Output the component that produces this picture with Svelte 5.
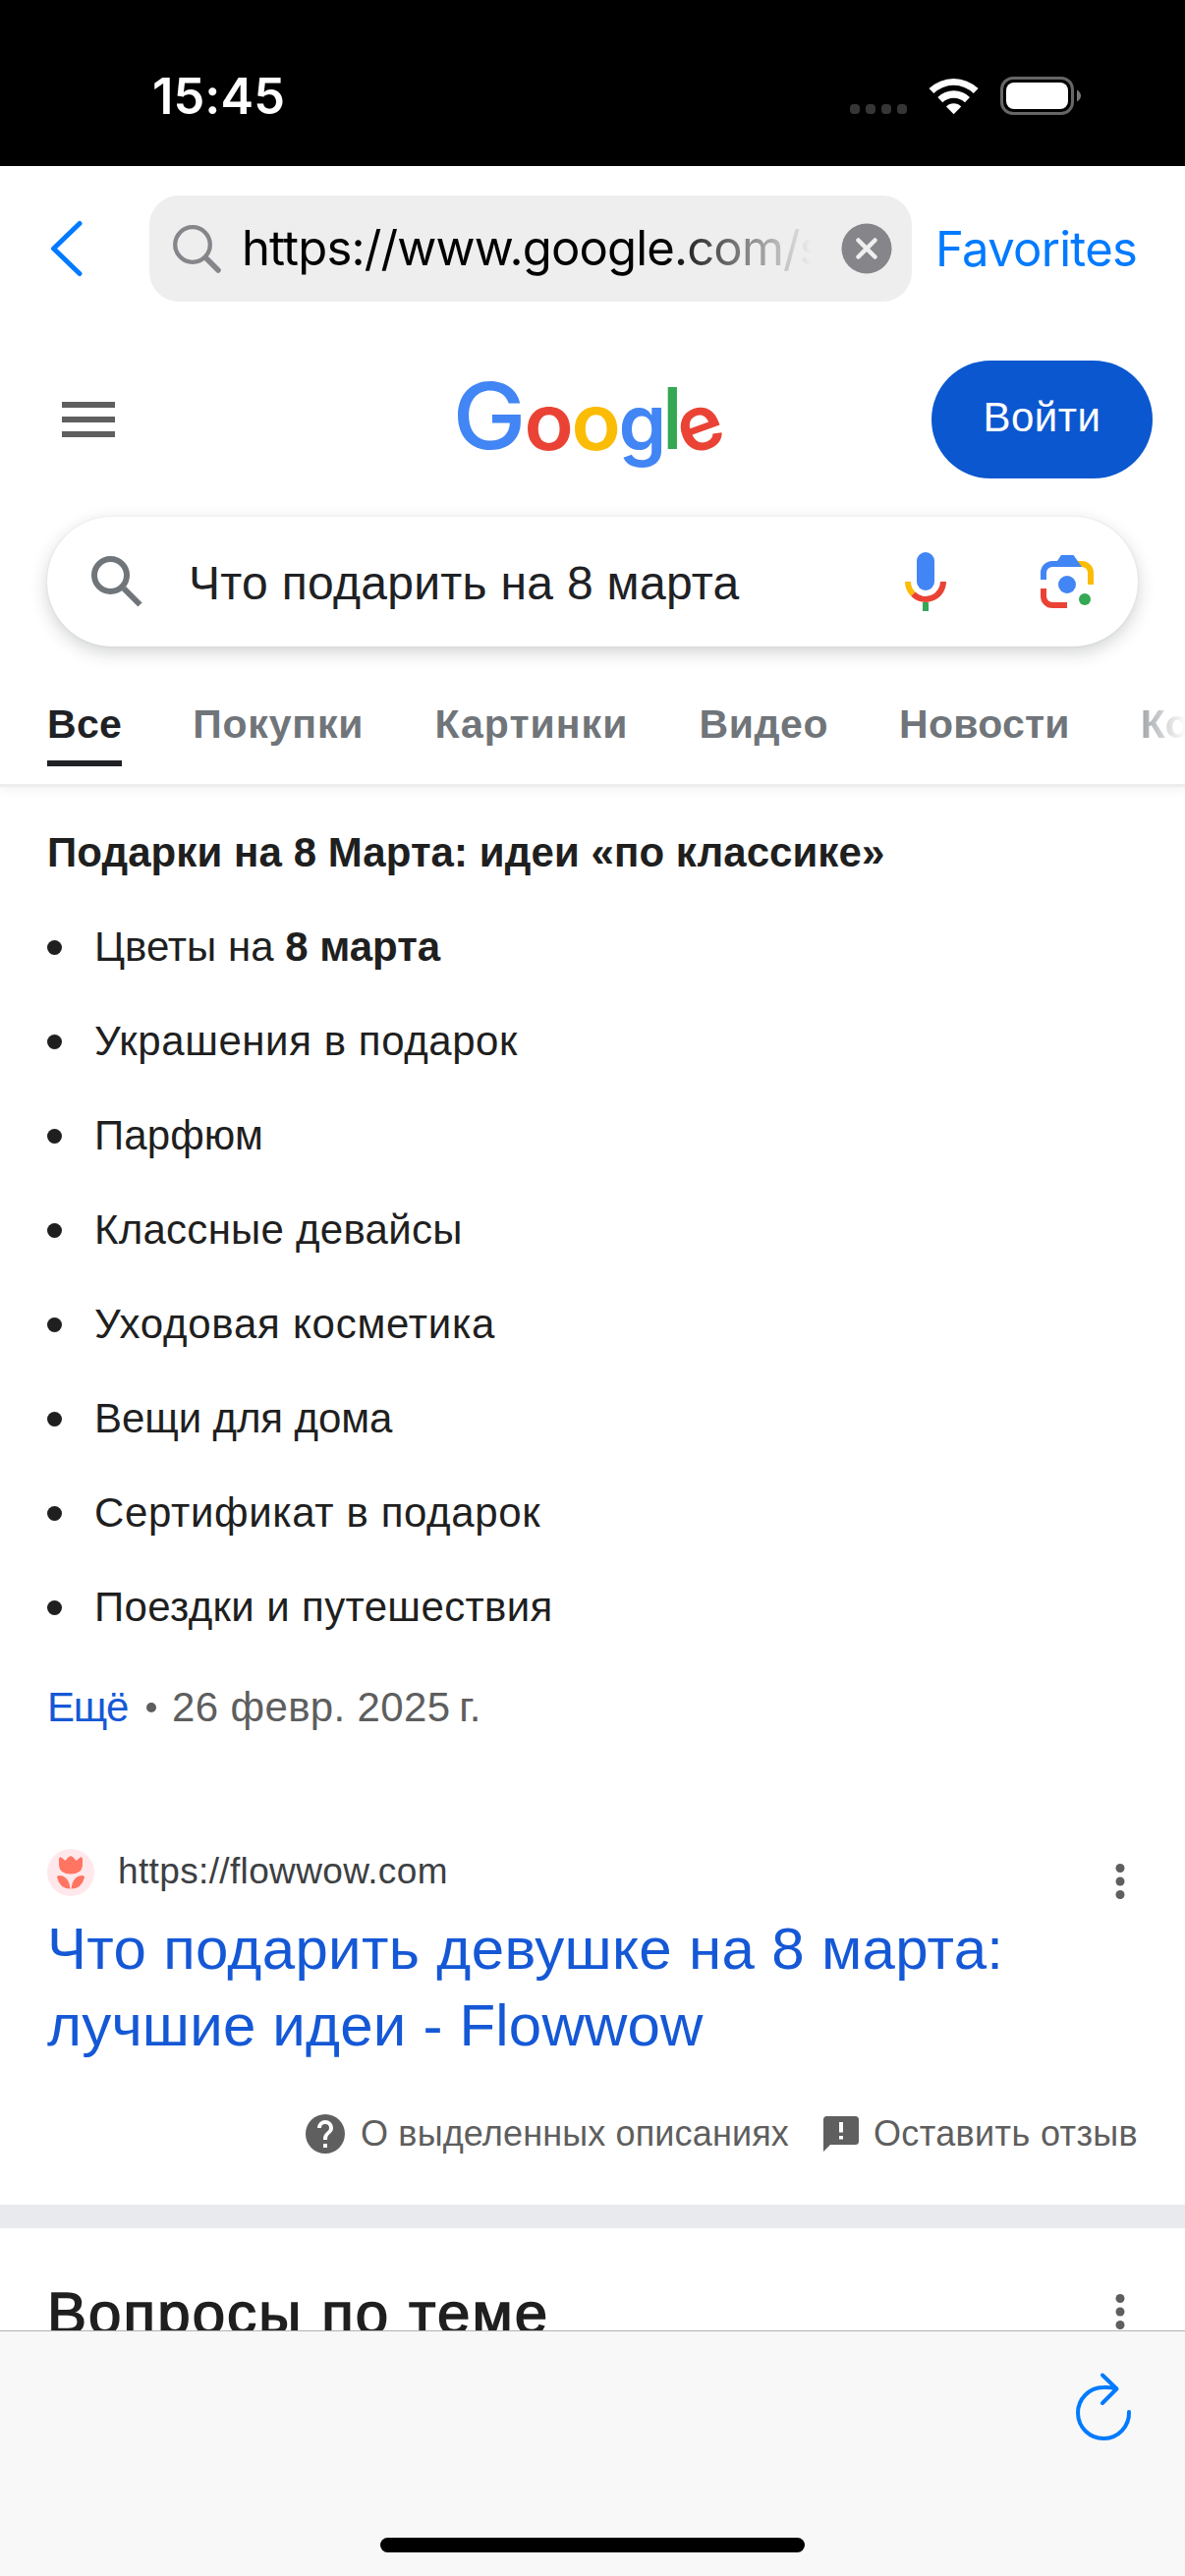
<script>
  // Each label carries its own tracking in px.
  const tabs = [
    { label: 'Покупки', track: 0.85 },
    { label: 'Картинки', track: 1.05 },
    { label: 'Видео', track: 0.6 },
    { label: 'Новости', track: 0.25 }
  ];
  const ideas = [
    { label: 'Украшения в подарок', track: 0.57 },
    { label: 'Парфюм', track: 0.1 },
    { label: 'Классные девайсы', track: 0.26 },
    { label: 'Уходовая косметика', track: 0.75 },
    { label: 'Вещи для дома', track: -0.1 },
    { label: 'Сертификат в подарок', track: 0.63 },
    { label: 'Поездки и путешествия', track: 0.36 }
  ];
</script>

{#snippet kebab()}
  <svg class="kebab" width="10" height="36" viewBox="0 0 10 36" fill="#5f5f5f"><circle cx="5" cy="4.500" r="4.500" /><circle cx="5" cy="18" r="4.500" /><circle cx="5" cy="31.500" r="4.500" /></svg>
{/snippet}

<div class="phone">
  <div class="status">
    <span class="clock">15:45</span>
    <div class="signals">
      <svg class="dots" width="60" height="12" viewBox="0 0 60 12" fill="#363636">
        <rect x="0" y="1" width="10" height="10" rx="4" /><rect x="16" y="1" width="10" height="10" rx="4" />
        <rect x="32" y="1" width="10" height="10" rx="4" /><rect x="48" y="1" width="10" height="10" rx="4" />
      </svg>
      <svg class="wifi" width="52" height="38" viewBox="0 0 52 38" fill="#fff">
        <path d="M.5 11A36.500 36.500 0 0 1 50.600 11L45.800 16A29 29 0 0 0 5.300 16Z" />
        <path d="M9.300 20A23.400 23.400 0 0 1 42 20L37 25.300A16.500 16.500 0 0 0 14.300 25.300Z" />
        <path d="M18 29.500A10.500 10.500 0 0 1 33.200 29.500L25.600 37.300Z" />
      </svg>
      <svg class="battery" width="83" height="40" viewBox="0 0 83 40">
        <rect x="1.500" y="1.500" width="72" height="36" rx="11.500" fill="none" stroke="#666" stroke-width="3" />
        <rect x="6" y="6" width="63" height="27" rx="8" fill="#fff" />
        <path d="M78 13.500Q82 16 82 19.500T78 25.500Z" fill="#777" />
      </svg>
    </div>
  </div>

  <div class="toolbar">
    <svg class="back" width="34" height="56" viewBox="0 0 34 56"><path d="M32 2.500L5.500 28L32 53.500" fill="none" stroke="#007aff" stroke-width="5" stroke-linecap="round" stroke-linejoin="round" /></svg>
    <div class="address">
      <svg width="49" height="49" viewBox="0 0 49 49" fill="none" stroke="#85858a" stroke-width="4.300"><circle cx="20" cy="20" r="17.800" /><path d="M33.500 33.500L46 46" stroke-width="5.500" stroke-linecap="round" /></svg>
      <span class="url">https://www.google.com/s</span>
      <svg class="clear" width="52" height="52" viewBox="0 0 52 52"><circle cx="26" cy="26" r="25.500" fill="#85858a" /><path d="M17.500 17.500L34.500 34.500M34.500 17.500L17.500 34.500" stroke="#efefef" stroke-width="4.500" stroke-linecap="round" /></svg>
    </div>
    <span class="fav">Favorites</span>
  </div>

  <header>
    <svg class="menu" width="54" height="36" viewBox="0 0 54 36" fill="#5f5f5f"><path d="M0 0H54V6H0ZM0 15H54V21H0ZM0 30H54V36H0Z" /></svg>
    <svg class="logo" width="270" height="96" viewBox="0 0 270 96" role="img" aria-label="Google">
      <text class="big" fill="#4285f4" transform="translate(-4.500 71) scale(1.080 1)">G</text>
      <text class="small" fill="#ea4335" transform="translate(68.500 71.500) scale(1.060 1.010)">o</text>
      <text class="small" fill="#fbbc05" transform="translate(116.500 71.500) scale(1.060 1.010)">o</text>
      <text class="small" fill="#4285f4" transform="translate(164.500 72.500) scale(1 1.030)">g</text>
      <text class="tall" fill="#34a853" transform="translate(208.500 71)">l</text>
      <text class="small" fill="#ea4335" transform="translate(233.500 78.500) rotate(-20)">e</text>
    </svg>
    <span class="login">Войти</span>
  </header>

  <div class="search">
    <svg width="52" height="52" viewBox="0 0 52 52" fill="none" stroke="#70757a"><circle cx="19.500" cy="19.500" r="16.500" stroke-width="6" /><path d="M33 33L49.500 49.500" stroke-width="6" /></svg>
    <span class="query">Что подарить на 8 марта</span>
    <svg class="mic" width="42" height="60" viewBox="0 0 42 60">
      <rect x="12" y="0" width="18" height="39" rx="9" fill="#4285f4" />
      <path d="M3 30A18 18 0 0 0 8.300 42.700" fill="none" stroke="#fbbc05" stroke-width="6" />
      <path d="M8.300 42.700A18 18 0 0 0 39 30" fill="none" stroke="#ea4335" stroke-width="6" />
      <path d="M18 51H24V60H18Z" fill="#34a853" />
    </svg>
    <svg class="lens" width="54" height="54" viewBox="0 0 54 54" fill="none">
      <path d="M36 9H42A9 9 0 0 1 51 18V30" stroke="#fbbc05" stroke-width="6" />
      <path d="M3 25V18A9 9 0 0 1 12 9H36" stroke="#4285f4" stroke-width="6" /><path d="M21 0H33.500L42 12H12L17 6Z" fill="#4285f4" />
      <path d="M3 34V42A9 9 0 0 0 12 51H27" stroke="#ea4335" stroke-width="6" />
      <circle cx="27" cy="30" r="9" fill="#4285f4" /><circle cx="45" cy="45" r="6" fill="#34a853" />
    </svg>
  </div>

  <nav>
    <span class="active">Все</span>
    {#each tabs as tab}<span style:letter-spacing="{tab.track}px">{tab.label}</span>{/each}
    <span class="fading">Ко</span>
  </nav>

  <main>
    <h3>Подарки на 8 Марта: идеи «по классике»</h3>
    <ul>
      <li>Цветы на <b>8 марта</b></li>
      {#each ideas as idea}<li style:letter-spacing="{idea.track}px">{idea.label}</li>{/each}
    </ul>
    <p class="meta"><span class="more">Ещё</span><i></i><span class="date">26 февр. 2025&#8201;г.</span></p>

    <div class="source">
      <svg width="48" height="48" viewBox="0 0 48 48"><circle cx="24" cy="24" r="24" fill="#ffe8ec" />
        <g fill="#ff7562"><path d="M12 10Q12.500 7 15 9L18.500 12Q21 8 24 7Q27 8 29.500 12L33 9Q35.500 7 36 10V17Q35 25.500 24 25.500Q13 25.500 12 17Z" /><path d="M10 29Q10 27 12 27Q22 27 23.500 40.500Q13 40.500 10 29ZM38 29Q38 27 36 27Q26 27 24.500 40.500Q35 40.500 38 29Z" /></g></svg>
      <span>https://flowwow.com</span>
      {@render kebab()}
    </div>
    <h2><span>Что подарить девушке на 8 марта:</span><br /><span class="second">лучшие идеи - Flowwow</span></h2>
    <div class="notes">
      <svg width="40" height="40" viewBox="0 0 24 24" fill="#5f5f5f"><path d="M12 0a12 12 0 1 0 0 24a12 12 0 0 0 0-24zm1.200 20.400h-2.400V18h2.400zm2.500-9.300l-1.100 1.100c-.9.900-1.400 1.600-1.400 3.400h-2.400V15c0-1.300.5-2.500 1.400-3.400l1.500-1.500c.4-.4.700-1 .7-1.700a2.400 2.400 0 0 0-4.800 0H7.200a4.800 4.800 0 0 1 9.600 0c0 1.100-.4 2-1.100 2.700z" /></svg>
      <span class="about">О выделенных описаниях</span>
      <svg class="report" width="36" height="36" viewBox="0 0 36 36"><path d="M3.500 0H32.500Q36 0 36 3.500V25.500Q36 29 32.500 29H7L0 36V3.500Q0 0 3.500 0Z" fill="#5f5f5f" /><path d="M16 6H20V16.500H16ZM16 20H20V23.500H16Z" fill="#fff" /></svg>
      <span class="feedback">Оставить отзыв</span>
    </div>
  </main>

  <section class="related">
    <span>Вопросы по теме</span>
    {@render kebab()}
  </section>

  <footer>
    <svg width="56" height="70" viewBox="0 0 56 70" fill="none" stroke="#007aff" stroke-width="4" stroke-linecap="round" stroke-linejoin="round"><path d="M54 40A26 26 0 1 1 28 15Q35 14.500 41 16.500M27 2.500L41.500 16.500L27 31" /></svg>
    <div class="home"></div>
  </footer>
</div>

<style>
  :global(body) { margin: 0; background: #fff; }
  .phone { width: 1206px; height: 2622px; overflow: hidden; display: flex; flex-direction: column; background: #fff; color: #1f1f1f; font-family: "Liberation Sans", Arial, sans-serif; }
  .phone * { box-sizing: border-box; }
  svg { flex: none; display: block; overflow: visible; }
  span { white-space: nowrap; }
  .status { height: 169px; flex: none; background: #000; color: #fff; display: flex; justify-content: space-between; padding: 68px 105px 0 155px; font-family: Inter, sans-serif; }
  .clock { font-size: 50.5px; line-height: 60px; font-weight: 600; letter-spacing: 0.1px; }
  .signals { display: flex; padding-top: 10px; }
  .dots { margin: 27px 20px 0 0; }
  .wifi { margin: 1px 21px 0 0; }
  .toolbar { height: 168px; flex: none; display: flex; align-items: center; padding: 0 0 0 49px; font-family: Inter, sans-serif; }
  .back { margin-right: 69px; }
  .address { width: 776px; height: 108px; border-radius: 30px; background: #eee; display: flex; align-items: center; padding: 0 20px 0 24px; }
  .url { margin-left: 21px; width: 580px; overflow: hidden; font-size: 49px; letter-spacing: -0.85px; line-height: 64px; color: #000; -webkit-mask-image: linear-gradient(90deg, #000 74%, transparent 100%); mask-image: linear-gradient(90deg, #000 74%, transparent 100%); }
  .clear { margin-left: auto; }
  .fav { margin-left: 24px; color: #007aff; font-size: 49px; letter-spacing: -0.7px; }
  header { height: 179px; flex: none; display: flex; align-items: center; padding: 0 33px 0 63px; }
  .logo { margin: 15px 0 0 348px; font-family: Inter, sans-serif; }
  .big { font-size: 93px; font-weight: 500; }
  .small { font-size: 78px; font-weight: 600; }
  .tall { font-size: 86px; font-weight: 500; }
  .login { margin-left: auto; width: 225px; height: 120px; border-radius: 60px; background: #0b57d0; color: #fff; font-size: 42px; letter-spacing: 0.5px; line-height: 116px; text-align: center; }
  .search { height: 132px; flex: none; margin: 10px 48px 0; border-radius: 66px; box-shadow: 0 6px 18px rgba(32, 33, 36, .2), 0 0 3px rgba(32, 33, 36, .08); display: flex; align-items: center; padding: 0 45px; }
  .query { margin: 2px 0 0 47px; font-size: 48px; letter-spacing: 0.3px; color: #202124; }
  .mic { margin-left: auto; }
  .lens { margin-left: 96px; }
  nav { height: 143px; flex: none; display: flex; gap: 72px; padding: 53px 0 0 48px; overflow: hidden; border-bottom: 3px solid #ebedef; box-shadow: 0 5px 8px rgba(0, 0, 0, .04); font-size: 41px; line-height: 52px; font-weight: 700; color: #70757a; }
  nav span { height: 69px; }
  .active { color: #202124; border-bottom: 6px solid #202124; letter-spacing: 0.3px; }
  .fading { -webkit-mask-image: linear-gradient(90deg, rgba(0, 0, 0, .65), transparent 46px); mask-image: linear-gradient(90deg, rgba(0, 0, 0, .65), transparent 46px); }
  main { height: 1443px; flex: none; padding: 40px 48px 0; }
  h3 { margin: 0; font-size: 42px; line-height: 54px; letter-spacing: 0.07px; }
  ul { list-style: none; margin: 42px 0 0; padding: 0; display: flex; flex-direction: column; gap: 42px; }
  li { font-size: 42px; line-height: 54px; display: flex; align-items: center; white-space: pre; }
  li::before { content: ""; width: 15px; height: 15px; border-radius: 50%; background: #1f1f1f; margin: 0 33px 0 0; }
  .meta { margin: 48px 0 0; display: flex; align-items: center; font-size: 42px; line-height: 54px; color: #5e5e5e; }
  .more { color: #1558d6; letter-spacing: -1.3px; }
  .date { letter-spacing: 0.36px; }
  .meta i { width: 10px; height: 10px; border-radius: 50%; background: #5e5e5e; margin: 0 16px 0 19px; }
  .source { margin-top: 111px; height: 60px; display: flex; align-items: center; font-size: 37px; letter-spacing: 0.36px; line-height: 46px; color: #3c4043; }
  .source > span { margin: 0 0 2px 24px; }
  .kebab { margin: 0 13px 0 auto; }
  .source .kebab { margin-top: 18px; }
  h2 { margin: 9px 0 0; font-size: 60px; line-height: 78px; letter-spacing: 0.33px; font-weight: 400; color: #1558d6; }
  .second { letter-spacing: 0.2px; }
  .notes { margin-top: 47px; display: flex; align-items: center; justify-content: flex-end; font-size: 36px; line-height: 48px; color: #5e5e5e; }
  .about { margin-left: 16px; letter-spacing: 0.15px; }
  .report { margin-left: 35px; }
  .feedback { margin-left: 15px; letter-spacing: 0.37px; }
  .related { flex: none; height: 128px; overflow: hidden; border-top: 24px solid #e8eaed; padding: 51px 48px 0; display: flex; }
  .related span { font-size: 60px; line-height: 71px; letter-spacing: 2.1px; -webkit-text-stroke: 1.5px #1f1f1f; }
  .related .kebab { margin-top: 16px; }
  footer { flex: none; height: 250px; border-top: 1px solid #b2b2b2; background: #f7f8f7; display: flex; flex-direction: column; justify-content: space-between; align-items: center; padding: 42px 55px 24px; }
  footer svg { align-self: flex-end; }
  .home { width: 432px; height: 15px; margin: 0 auto; border-radius: 8px; background: #000; }
</style>
